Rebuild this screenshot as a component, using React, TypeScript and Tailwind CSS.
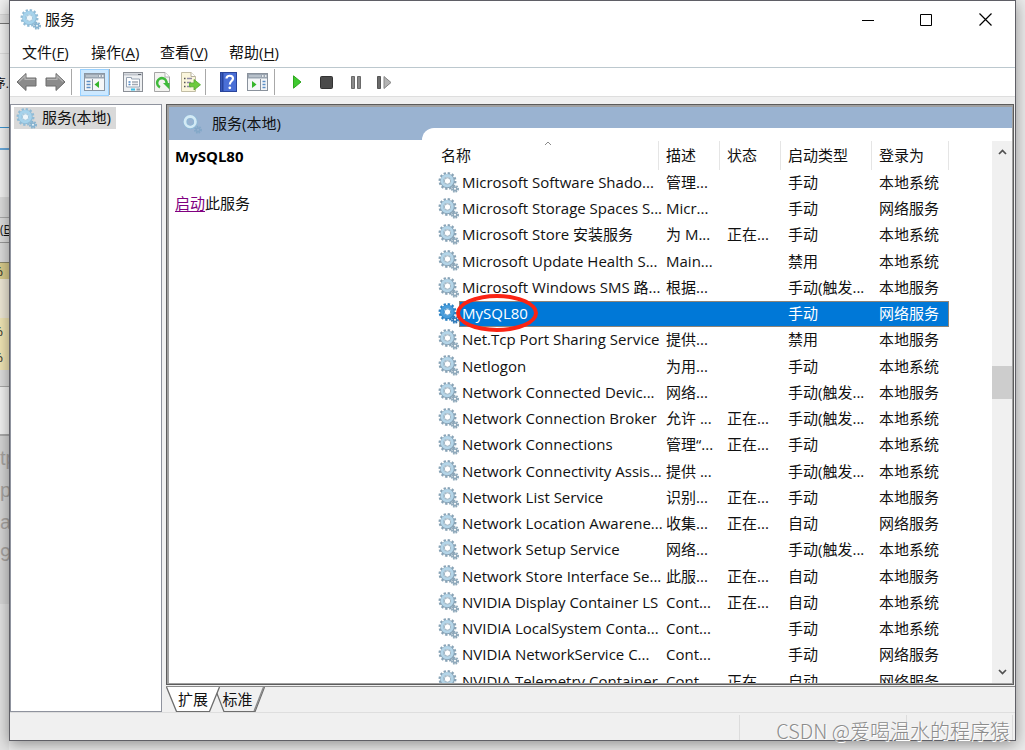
import { useState } from "react";
import type { ReactNode } from "react";
import clsx from "clsx";

interface Service {
  name: string;
  desc: string;
  status?: string;
  startup: string;
  logon: string;
}

const services: Service[] = [
  { name: "Microsoft Software Shado...", desc: "管理...", startup: "手动", logon: "本地系统" },
  { name: "Microsoft Storage Spaces S...", desc: "Micr...", startup: "手动", logon: "网络服务" },
  { name: "Microsoft Store 安装服务", desc: "为 M...", status: "正在...", startup: "手动", logon: "本地系统" },
  { name: "Microsoft Update Health S...", desc: "Main...", startup: "禁用", logon: "本地系统" },
  { name: "Microsoft Windows SMS 路...", desc: "根据...", startup: "手动(触发...", logon: "本地服务" },
  { name: "MySQL80", desc: "", startup: "手动", logon: "网络服务" },
  { name: "Net.Tcp Port Sharing Service", desc: "提供...", startup: "禁用", logon: "本地服务" },
  { name: "Netlogon", desc: "为用...", startup: "手动", logon: "本地系统" },
  { name: "Network Connected Devic...", desc: "网络...", startup: "手动(触发...", logon: "本地服务" },
  { name: "Network Connection Broker", desc: "允许 ...", status: "正在...", startup: "手动(触发...", logon: "本地系统" },
  { name: "Network Connections", desc: "管理“...", status: "正在...", startup: "手动", logon: "本地系统" },
  { name: "Network Connectivity Assis...", desc: "提供 ...", startup: "手动(触发...", logon: "本地系统" },
  { name: "Network List Service", desc: "识别...", status: "正在...", startup: "手动", logon: "本地服务" },
  { name: "Network Location Awarene...", desc: "收集...", status: "正在...", startup: "自动", logon: "网络服务" },
  { name: "Network Setup Service", desc: "网络...", startup: "手动(触发...", logon: "本地系统" },
  { name: "Network Store Interface Se...", desc: "此服...", status: "正在...", startup: "自动", logon: "本地服务" },
  { name: "NVIDIA Display Container LS", desc: "Cont...", status: "正在...", startup: "自动", logon: "本地系统" },
  { name: "NVIDIA LocalSystem Conta...", desc: "Cont...", startup: "手动", logon: "本地系统" },
  { name: "NVIDIA NetworkService C...", desc: "Cont...", startup: "手动", logon: "网络服务" },
  { name: "NVIDIA Telemetry Container", desc: "Cont...", status: "正在...", startup: "自动", logon: "网络服务" },
];

const menus = [
  { label: "文件", hotkey: "F" },
  { label: "操作", hotkey: "A" },
  { label: "查看", hotkey: "V" },
  { label: "帮助", hotkey: "H" },
];

function GearIcon({ variant = "list" }: { variant?: "list" | "soft" | "selected" | "header" }) {
  const colors = {
    list: { edge: "#88a3b6", body: "#b4d5e8", small: "#8ea8ba", hole: "#ffffff" },
    soft: { edge: "#90bbd6", body: "#a6d3ec", small: "#86b2cf", hole: "#eef6fa" },
    selected: { edge: "#2c82c4", body: "#4a9fdd", small: "#2d78b8", hole: "#ffffff" },
    header: { edge: "#8fb9d6", body: "#d3eaf5", small: "#84a8c8", hole: "#9ab3d1" },
  }[variant];
  return (
    <svg width="21" height="21" viewBox="0 0 21 21" aria-hidden="true" className="shrink-0">
      {variant !== "header" && (
        <circle cx="9.5" cy="9" r="7.8" fill="none" stroke={colors.edge} strokeWidth="2.4" strokeDasharray="2.3 1.78" />
      )}
      <circle cx="9.5" cy="9" r="5.5" fill={colors.hole} stroke={colors.edge} strokeWidth="3.6" />
      <circle cx="9.2" cy="8.7" r="5.2" fill="none" stroke={colors.body} strokeWidth="2.8" />
      <circle cx="9.5" cy="9" r="3.2" fill={colors.hole} stroke={colors.edge} strokeWidth="0.8" />
      <circle cx="17" cy="16.8" r="3.1" fill="none" stroke={colors.small} strokeWidth="1.8" strokeDasharray="1.5 1.1" />
      <circle cx="17" cy="16.8" r="1.8" fill={colors.hole} stroke={colors.small} strokeWidth="1.6" />
    </svg>
  );
}

function ArrowIcon({ flip }: { flip?: boolean }) {
  return (
    <svg width="21" height="20" viewBox="0 0 21 20" className={clsx(flip && "-scale-x-100")}>
      <path d="M1 10 L10 1.5 V6 H20 V14 H10 V18.5 Z" fill="#8b8b8b" stroke="#6c6c6c" strokeLinejoin="round" />
      <path d="M3 9.6 L9 4 V7.4 H19" fill="none" stroke="#b4b4b4" strokeWidth="1.2" />
    </svg>
  );
}

function TreePaneIcon() {
  return (
    <svg width="21" height="18" viewBox="0 0 21 18">
      <rect x="0.5" y="0.5" width="20" height="17" fill="#f6f7f8" stroke="#8a96a3" />
      <rect x="1" y="1" width="19" height="4.5" fill="#9aa5b1" />
      <path d="M2 3H14" stroke="#d6dde4" />
      <path d="M15 3h1.5M18 3h1.5" stroke="#fff" strokeWidth="1.4" />
      <path d="M8.5 6V17" stroke="#8593a3" />
      <path d="M2.5 8.5h4M2.5 11.5h4M2.5 14.5h4" stroke="#5c8fc6" strokeWidth="1.5" />
      <path d="M15 8V15L10.5 11.5Z" fill="#35b52a" />
    </svg>
  );
}

function ActionPaneIcon() {
  return (
    <svg width="21" height="18" viewBox="0 0 21 18">
      <rect x="0.5" y="0.5" width="20" height="17" fill="#f4f6f8" stroke="#8a929c" />
      <rect x="1" y="1" width="19" height="4.5" fill="#9aa5b1" />
      <path d="M2 3H14" stroke="#d6dde4" />
      <path d="M15 3h1.5M18 3h1.5" stroke="#fff" strokeWidth="1.4" />
      <path d="M13.5 6V17" stroke="#8a929c" />
      <path d="M15.5 8.5h3M15.5 11.5h3M15.5 14.5h3" stroke="#5c8fc6" strokeWidth="1.5" />
      <path d="M5 8V15L9.5 11.5Z" fill="#35b52a" />
    </svg>
  );
}

function PropertiesIcon() {
  return (
    <svg width="20" height="20" viewBox="0 0 20 20">
      <rect x="0.5" y="0.5" width="19" height="19" fill="#eef0f2" stroke="#8b8f96" />
      <path d="M1 2.5H19" stroke="#c0c5cc" strokeWidth="2" />
      <path d="M15 2.5H18" stroke="#5f666f" />
      <path d="M3.5 15V5.5H8.5V7H16.5V15Z" fill="#fff" stroke="#97a3b2" />
      <path d="M5.5 10h2M5.5 12.5h2" stroke="#4d86c4" strokeWidth="1.3" />
      <path d="M9 10h6M9 12.5h6" stroke="#a2a9b3" strokeWidth="1.3" />
      <path d="M8 17.5H12" stroke="#39c0e8" strokeWidth="2" />
      <path d="M13.5 17.5H17" stroke="#9ba3ad" strokeWidth="2" />
    </svg>
  );
}

function RefreshIcon() {
  return (
    <svg width="18" height="20" viewBox="0 0 18 20">
      <path d="M1.5 0.5H12L16.5 5V19.5H1.5Z" fill="#f3f3f0" stroke="#a5a5a5" />
      <path d="M12 0.5V5H16.5" fill="#fff" stroke="#b5b5b5" />
      <path d="M7 15.2A4.7 4.7 0 1 1 13.5 11.5" fill="none" stroke="#3fba3a" strokeWidth="2.6" />
      <path d="M10 11H16.5V17.5Z" fill="#3fba3a" />
    </svg>
  );
}

function ExportIcon() {
  return (
    <svg width="20" height="20" viewBox="0 0 20 20">
      <path d="M0.5 0.5H10L14.5 4.5V19.5H0.5Z" fill="#fbf6dc" stroke="#c2bda5" />
      <path d="M10 0.5V4.5H14.5" fill="#fff" stroke="#b5b09c" />
      <path d="M3 6.5h1.5M3 10.5h1.5M3 14.5h1.5" stroke="#555" strokeWidth="1.5" />
      <path d="M6 6.5h5M6 10.5h4M6 14.5h4" stroke="#8e8ba6" strokeWidth="1.3" />
      <path d="M8.5 11H13V7.5L19.5 12.8L13 18V14.8H8.5Z" fill="#6ecb3c" stroke="#52a82b" strokeWidth="0.8" />
    </svg>
  );
}

function HelpIcon() {
  return (
    <svg width="17" height="20" viewBox="0 0 17 20">
      <rect x="0.5" y="0.5" width="16" height="19" fill="#4a6fd6" stroke="#2a459c" />
      <path d="M2.5 1V19" stroke="#27449f" strokeWidth="2" />
      <path d="M6.5 6.5C6.5 2.8 13 2.8 13 6.5C13 9 9.8 9.2 9.8 12.5" fill="none" stroke="#fff" strokeWidth="2.2" />
      <circle cx="9.8" cy="15.8" r="1.4" fill="#fff" />
    </svg>
  );
}

function ToolButton({ label, active, children }: { label: string; active?: boolean; children: ReactNode }) {
  return (
    <button
      aria-label={label}
      className={clsx(
        "flex h-[27px] w-[29px] items-center justify-center",
        active && "border border-[#99d1ff] bg-[#cce8ff]"
      )}
    >
      {children}
    </button>
  );
}

function Separator() {
  return <div className="h-[26px] w-[9px] border-l border-[#a8a8a8]" />;
}

function Toolbar() {
  return (
    <div className="flex h-[29px] items-center border-b border-[#dedede] bg-white">
      <div className="flex w-[61px] items-center pl-0.5">
        <ToolButton label="后退"><ArrowIcon /></ToolButton>
        <ToolButton label="前进"><ArrowIcon flip /></ToolButton>
      </div>
      <Separator />
      <ToolButton label="显示/隐藏控制台树" active><TreePaneIcon /></ToolButton>
      <Separator />
      <ToolButton label="属性"><PropertiesIcon /></ToolButton>
      <ToolButton label="刷新"><RefreshIcon /></ToolButton>
      <ToolButton label="导出列表"><ExportIcon /></ToolButton>
      <Separator />
      <ToolButton label="帮助"><HelpIcon /></ToolButton>
      <ToolButton label="显示/隐藏操作窗格"><ActionPaneIcon /></ToolButton>
      <div className="flex pl-0.5">
        <Separator />
        <ToolButton label="启动服务">
          <svg width="9" height="14" viewBox="0 0 9 14">
            <path d="M0.5 0.8L8 7L0.5 13.2Z" fill="#3fca2f" stroke="#2ea51f" />
          </svg>
        </ToolButton>
        <ToolButton label="停止服务">
          <svg width="13" height="13" viewBox="0 0 13 13">
            <rect x="0.5" y="0.5" width="12" height="12" rx="1" fill="#4b4b4b" stroke="#333" />
          </svg>
        </ToolButton>
        <ToolButton label="暂停服务">
          <svg width="10" height="13" viewBox="0 0 10 13">
            <path d="M0.5 0.5h3v12h-3zM6.5 0.5h3v12h-3z" fill="#8a8a8a" stroke="#6a6a6a" />
          </svg>
        </ToolButton>
        <ToolButton label="重启动服务">
          <svg width="15" height="13" viewBox="0 0 15 13">
            <path d="M0.5 0.5h3v12h-3z" fill="#6a6a6a" stroke="#555" />
            <path d="M7 0.5L14 6.5L7 12.5Z" fill="#b4b4b4" stroke="#868686" />
          </svg>
        </ToolButton>
      </div>
    </div>
  );
}

function ScrollBar() {
  return (
    <div className="flex w-5 shrink-0 flex-col bg-[#f0f0f0]">
      <button aria-label="向上滚动" className="flex h-[22px] items-center justify-center">
        <svg width="9" height="6" viewBox="0 0 9 6">
          <path d="M1 5L4.5 1.5L8 5" fill="none" stroke="#505050" strokeWidth="1.7" />
        </svg>
      </button>
      <div className="flex flex-1 flex-col">
        <div className="grow-[203]" />
        <div className="h-[33px] bg-[#cdcdcd]" />
        <div className="grow-[263]" />
      </div>
      <button aria-label="向下滚动" className="flex h-[22px] items-center justify-center">
        <svg width="9" height="6" viewBox="0 0 9 6">
          <path d="M1 1L4.5 4.5L8 1" fill="none" stroke="#505050" strokeWidth="1.7" />
        </svg>
      </button>
    </div>
  );
}

function ServiceTable({ selected, onSelect }: { selected: string; onSelect: (name: string) => void }) {
  const head = "border-r border-[#e5e5e5] pt-0 pb-0.5 pl-[7px] text-left font-normal";
  return (
    <table className="w-[511px] table-fixed border-separate border-spacing-0 whitespace-nowrap">
      <colgroup>
        <col className="w-[21px]" />
        <col className="w-[200px]" />
        <col className="w-[61px]" />
        <col className="w-[61px]" />
        <col className="w-[91px]" />
        <col className="w-[77px]" />
      </colgroup>
      <thead>
        <tr className="h-[29px]">
          <th colSpan={2} className="relative border-r border-[#e5e5e5] pt-0 pb-0.5 pl-[3px] text-left font-normal">
            名称
            <svg width="8" height="5" viewBox="0 0 8 5" className="absolute inset-x-0 top-0 mx-auto">
              <path d="M1 4L4 1L7 4" fill="none" stroke="#8a8a8a" />
            </svg>
          </th>
          <th className={head}>描述</th>
          <th className={head}>状态</th>
          <th className={head}>启动类型</th>
          <th className={head}>登录为</th>
        </tr>
      </thead>
      <tbody>
        {services.map((service) => {
          const active = service.name === selected;
          const highlight = active && "border-y border-[#8d8478] bg-[#0078d7] text-white";
          const cell = clsx("pt-0 pb-0.5 pl-[7px]", highlight);
          return (
            <tr key={service.name} onClick={() => onSelect(service.name)} className="h-[26px] nth-[4n]:h-[27px]">
              <td className="pt-0 pb-0.5"><GearIcon variant={active ? "selected" : "list"} /></td>
              <td className={clsx("relative pt-0 pb-0.5", active ? "border-l pl-0.5" : "pl-[3px]", highlight)}>
                {service.name}
                {service.name === "MySQL80" && (
                  <span className="absolute -top-2 -left-1 h-[38px] w-[82px] rounded-[50%] border-4 border-[#fb2414]" />
                )}
              </td>
              <td className={cell}>{service.desc}</td>
              <td className={cell}>{service.status}</td>
              <td className={cell}>{service.startup}</td>
              <td className={clsx(cell, active && "border-r")}>{service.logon}</td>
            </tr>
          );
        })}
      </tbody>
    </table>
  );
}

// Edges of the windows that lie behind this one
function BackgroundStrip() {
  return (
    <div className="flex w-[9px] shrink-0 flex-col overflow-hidden whitespace-nowrap text-[13px]">
      <div className="h-[15px] border-b border-[#d5d5d5] bg-[#f0f0f0]" />
      <div className="h-[9px] border-b border-[#777] bg-[#e2e2e2]" />
      <div className="h-[30px] border-b border-[#ddd] bg-[#f3f3f3]" />
      <div className="flex h-[74px] items-center justify-end border-b border-[#3c95d0] bg-[#f1f1f1] pb-3.5 text-[12px]">序.</div>
      <div className="h-[22px] border-b-2 border-[#69a9db] bg-[#f1f1f1]" />
      <div className="h-[47px] bg-[#f1f1f1]" />
      <div className="h-[21px] border-b border-[#aaa] bg-[#dcdcdc]" />
      <div className="flex h-[25px] items-center border-b border-[#999] bg-[#dedede] text-[12px]">(<u>B</u></div>
      <div className="h-5 border-b border-[#8c886a] bg-[#dcdcdc]" />
      <div className="flex h-4 items-center justify-end bg-[#d9cc8c] pr-1.5 leading-none">%</div>
      <div className="h-[39px] bg-[#eee8d6]" />
      <div className="flex h-[52px] flex-col items-end justify-around bg-[#f0e5b4] pr-1.5 leading-none">
        <span>%</span>
        <span>%</span>
      </div>
      <div className="h-[17px] border-b border-[#aaa] bg-[#dedede]" />
      <div className="h-[49px] border-b-2 border-[#aaa] bg-[#f2f2f2]" />
      <div className="flex h-[168px] flex-col items-start bg-[#d6d6d6] pt-1.5 font-['Liberation_Sans',sans-serif] text-[20px] leading-8 text-[#a8a4a0]">
        <span>tp</span>
        <span>pz</span>
        <span>a(</span>
        <span>9</span>
      </div>
      <div className="flex-1 bg-[#e2e2e2]" />
    </div>
  );
}

function ViewTabs({ tab, onChange }: { tab: string; onChange: (tab: string) => void }) {
  return (
    <div className="mt-px flex h-[26px] border-t border-[#8c8c8c]">
      {["扩展", "标准"].map((label) => (
        <button
          key={label}
          onClick={() => onChange(label)}
          className={clsx("relative h-[25px] pb-0.5", label === "扩展" ? "z-10 w-[54px]" : "-ml-1.5 w-[51px] pr-1")}
        >
          <svg viewBox="0 0 54 26" preserveAspectRatio="none" className="absolute inset-0 h-full w-full">
            <path d="M0.5 0L10.5 25.5H43.5L53.5 0" fill={label === tab ? "#fff" : "#f0f0f0"} stroke="#6d6d6d" strokeWidth="1.3" />
            {label !== tab && <path d="M42.5 25L52.5 0" stroke="#8a8a8a" strokeWidth="1.5" />}
          </svg>
          <span className="relative">{label}</span>
        </button>
      ))}
    </div>
  );
}

export default function App() {
  const [selected, setSelected] = useState("MySQL80");
  const [tab, setTab] = useState("扩展");

  return (
    <div className="relative flex h-screen overflow-hidden bg-[#ebebeb] font-['Open_Sans','Noto_Sans_CJK_SC',sans-serif] text-[15px] leading-5 text-[#111]">
      <BackgroundStrip />
      <main className="mr-[9px] mb-[9px] flex min-w-0 flex-1 flex-col border border-[#5f5f66] bg-[#f0f0f0] shadow-[0_3px_14px_rgba(0,0,0,0.4)]">
        <header className="flex h-[37px] shrink-0 items-center bg-white pl-2.5">
          <GearIcon variant="soft" />
          <h1 className="flex-1 pb-0.5 pl-1">服务</h1>
          <button aria-label="最小化" className="flex h-full w-[58px] items-center justify-center">
            <svg width="12" height="12" viewBox="0 0 12 12"><path d="M0 6.5H12" stroke="#000" /></svg>
          </button>
          <button aria-label="最大化" className="flex h-full w-[58px] items-center justify-center">
            <svg width="12" height="12" viewBox="0 0 12 12"><path d="M0.5 0.5H11.5V11.5H0.5Z" fill="none" stroke="#000" /></svg>
          </button>
          <button aria-label="关闭" className="flex h-full w-[60px] items-center justify-center">
            <svg width="13" height="13" viewBox="0 0 13 13"><path d="M0.5 0.5L12.5 12.5M12.5 0.5L0.5 12.5" stroke="#000" strokeWidth="1.2" /></svg>
          </button>
        </header>

        <nav className="flex h-[30px] shrink-0 items-center border-b border-[#bcc8ce] bg-white pb-0.5">
          {menus.map((menu) => (
            <button key={menu.hotkey} className="w-[69px] pl-3 text-left">
              {menu.label}(<u className="underline-offset-2">{menu.hotkey}</u>)
            </button>
          ))}
        </nav>

        <Toolbar />

        <div className="mt-[7px] flex min-h-0 flex-1 gap-1">
          <aside className="w-[152px] shrink-0 border border-[#8f939e] bg-white px-[3px] py-0.5">
            <button className="flex h-[22px] items-center gap-[5px] bg-[#d9d9d9] pr-[5px] pl-0.5">
              <GearIcon variant="soft" />
              <span className="pb-0.5">服务(本地)</span>
            </button>
          </aside>

          <section className="flex min-w-0 flex-1 flex-col">
            <div className="mr-px flex min-h-0 flex-1 border border-[#5c5c5c]">
              <div className="flex min-w-0 flex-1 border border-t-2 border-l-2 border-[#a0a0a0] bg-[#9ab3d1]">
                <div className="flex w-[253px] shrink-0 flex-col">
                  <h2 className="flex h-[33px] items-center gap-2.5 pl-3">
                    <GearIcon variant="header" />
                    <span className="pb-px">服务(本地)</span>
                  </h2>
                  <div className="flex-1 bg-white px-1.5 pt-1.5">
                    <h3 className="font-bold text-black">{selected}</h3>
                    <p className="pt-[27px]">
                      <a href="#start" className="text-[#800080] underline underline-offset-2">启动</a>此服务
                    </p>
                  </div>
                </div>
                <div className="flex min-w-0 flex-1 pt-[21px]">
                  <div className="flex min-w-0 flex-1 rounded-tl-[12px] bg-white pt-[13px] pl-4">
                    <div className="min-w-0 flex-1 overflow-hidden">
                      <ServiceTable selected={selected} onSelect={setSelected} />
                    </div>
                    <ScrollBar />
                  </div>
                </div>
              </div>
            </div>
            <ViewTabs tab={tab} onChange={setTab} />
          </section>
        </div>

        <footer className="flex h-7 shrink-0 justify-end border-t border-[#dedede] pt-0.5">
          <div className="w-[167px] border-l border-[#dcdcdc]" />
          <div className="mr-0.5 w-[107px] border-x border-[#dcdcdc]" />
        </footer>
      </main>
      <span className="absolute right-[15px] bottom-1 font-['Noto_Sans_CJK_SC',sans-serif] text-[20px] leading-[30px] font-light text-[#8c8c8c] [text-shadow:1px_1px_0_#fff]">
        CSDN @爱喝温水的程序猿
      </span>
    </div>
  );
}
